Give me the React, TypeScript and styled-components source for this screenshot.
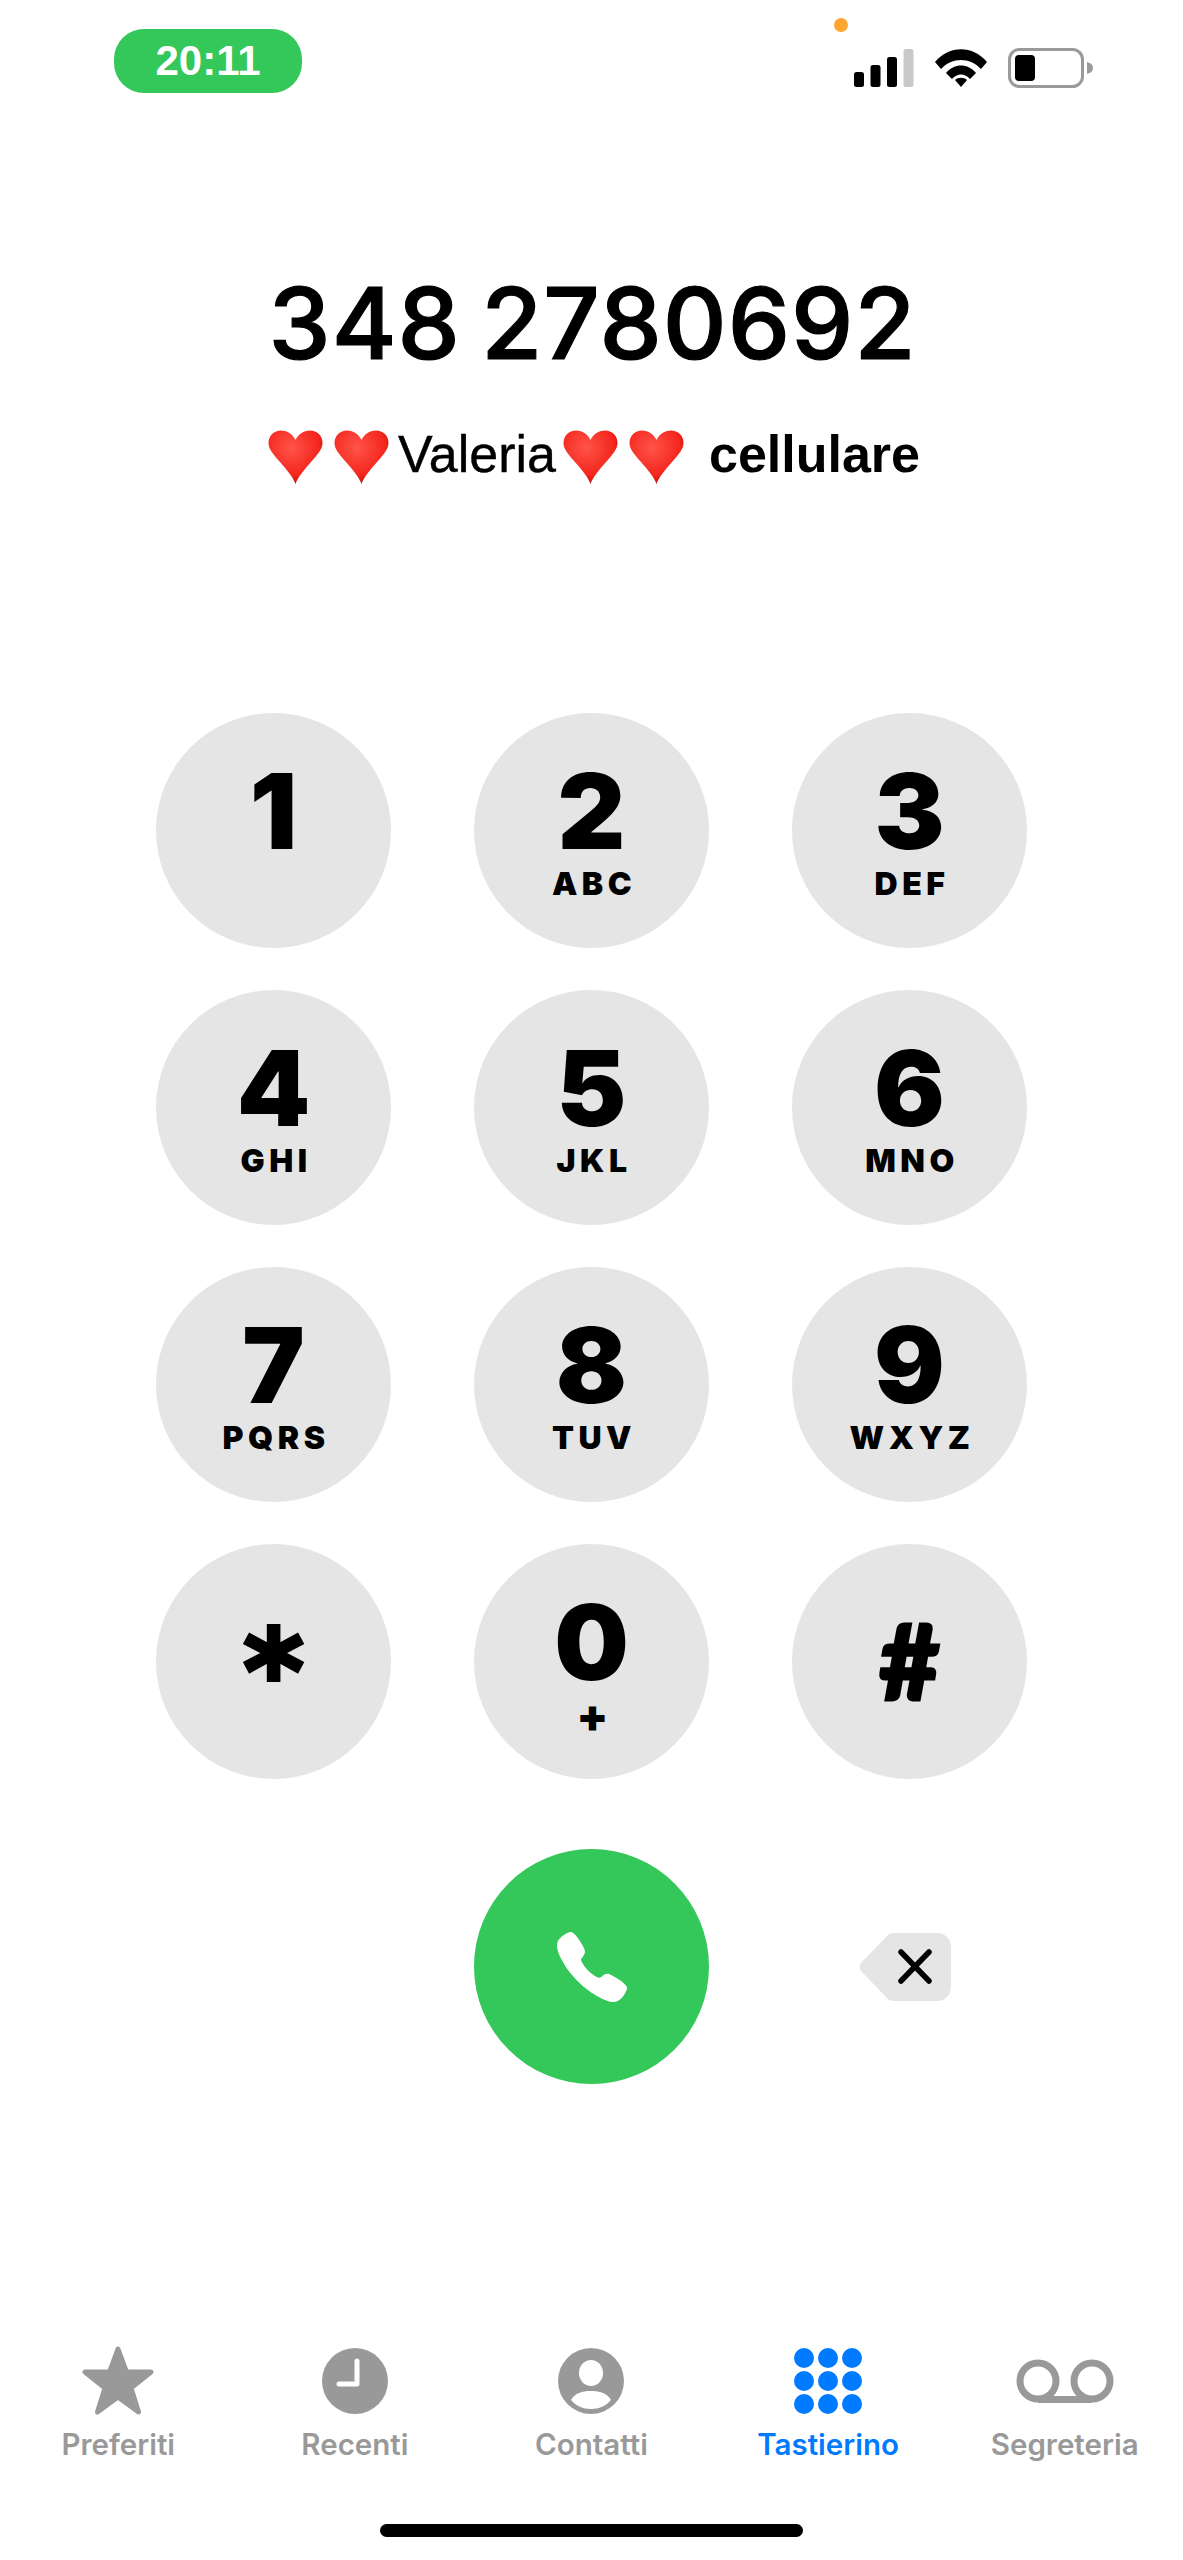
import React from 'react';
import styled, { createGlobalStyle } from 'styled-components';
import { IoCall } from 'react-icons/io5';

const GlobalStyle = createGlobalStyle`
  html, body {
    margin: 0;
    padding: 0;
    background: #fff;
  }
`;

const Page = styled.div`
  width: 1183px;
  height: 2560px;
  display: flex;
  flex-direction: column;
  position: relative;
  overflow: hidden;
  background: #fff;
  font-family: Inter, "Liberation Sans", sans-serif;
  color: #000;
`;

const StatusBar = styled.div`
  height: 64px;
  margin-top: 29px;
  padding: 0 89px 0 114px;
  display: flex;
  align-items: center;
  justify-content: space-between;
`;

const TimePill = styled.div`
  width: 188px;
  height: 64px;
  border-radius: 30px;
  background: #34c759;
  color: #fff;
  font-family: "Liberation Sans", Arial, sans-serif;
  font-size: 42px;
  font-weight: 700;
  display: flex;
  align-items: center;
  justify-content: center;
`;

const StatusIcons = styled.div`
  display: flex;
  align-items: center;
  gap: 21px;
  padding-top: 13px;
`;

const OrangeDot = styled.div`
  position: absolute;
  left: 834px;
  top: 18px;
  width: 14px;
  height: 14px;
  border-radius: 50%;
  background: #ffa530;
`;

const PhoneNumber = styled.div`
  margin-top: 170px;
  padding-left: 2px;
  text-align: center;
  font-size: 99px;
  line-height: 120px;
  font-weight: 500;
  letter-spacing: 1px;
  word-spacing: -7px;
  -webkit-text-stroke: 1.2px #000;
`;

const Contact = styled.div`
  margin-top: 43px;
  padding-left: 5px;
  height: 56px;
  display: flex;
  align-items: center;
  justify-content: center;
  font-family: "Liberation Sans", Arial, sans-serif;
  font-size: 52px;
`;

const Name = styled.span`
  margin: 0 7px 0 9px;
  -webkit-text-stroke: 0.4px #000;
`;

const Label = styled.span`
  margin-left: 25px;
  font-weight: 700;
  font-size: 52px;
`;

const Heart = styled.svg<{ $gap?: boolean }>`
  width: 55px;
  height: 54px;
  flex: none;
  margin-top: 5px;
  margin-left: ${props => (props.$gap ? '11px' : '0')};
`;

const Keypad = styled.div`
  margin-top: 231px;
  display: grid;
  grid-template-columns: repeat(3, 235px);
  grid-auto-rows: 235px;
  column-gap: 83px;
  row-gap: 42px;
  justify-content: center;
`;

const Key = styled.div`
  width: 235px;
  height: 235px;
  border-radius: 50%;
  background: #e5e5e5;
  display: flex;
  flex-direction: column;
  align-items: center;
`;

const Digit = styled.div`
  margin-top: 44px;
  font-size: 105px;
  line-height: 107px;
  font-weight: 900;
`;

const Letters = styled.div`
  margin-top: 1px;
  padding-left: 5px;
  font-size: 32px;
  line-height: 38px;
  font-weight: 900;
  letter-spacing: 4.5px;
`;

const Plus = styled.div`
  margin-top: -2px;
  padding-left: 2px;
  font-size: 46px;
  line-height: 44px;
  font-weight: 900;
`;

const Symbol = styled.div<{ $top: number; $size: number; $font: string; $stroke: number }>`
  margin-top: ${props => props.$top}px;
  font-family: ${props => props.$font}, sans-serif;
  font-size: ${props => props.$size}px;
  line-height: ${props => props.$size}px;
  font-weight: 900;
  -webkit-text-stroke: ${props => props.$stroke}px #000;
`;

const CallRow = styled.div`
  margin-top: 70px;
  display: grid;
  grid-template-columns: repeat(3, 235px);
  column-gap: 83px;
  justify-content: center;
  align-items: center;
`;

const CallButton = styled.div`
  grid-column: 2;
  width: 235px;
  height: 235px;
  border-radius: 50%;
  background: #34c759;
  color: #fff;
  display: flex;
  align-items: center;
  justify-content: center;
`;

const Backspace = styled.svg`
  grid-column: 3;
  justify-self: center;
  margin-right: 9px;
  width: 92px;
  height: 68px;
`;

const TabBar = styled.div`
  margin-top: auto;
  display: grid;
  grid-template-columns: repeat(5, 1fr);
`;

const Tab = styled.div<{ $active?: boolean }>`
  display: flex;
  flex-direction: column;
  align-items: center;
  color: ${props => (props.$active ? '#007aff' : '#999')};
`;

const TabIcon = styled.div`
  height: 72px;
  display: flex;
  align-items: center;
  justify-content: center;
`;

const TabLabel = styled.div`
  margin-top: 10px;
  font-size: 29.5px;
  line-height: 34px;
  font-weight: 600;
`;

const HomeIndicator = styled.div`
  width: 423px;
  height: 13px;
  margin: 63px auto 23px;
  border-radius: 7px;
  background: #000;
`;

const HeartIcon = ({ gap, id }: { gap?: boolean; id: string }) => (
  <Heart $gap={gap} viewBox="0 0 55 54">
    <defs>
      <radialGradient id={id} cx="42%" cy="32%" r="72%">
        <stop offset="0%" stopColor="#ff5449" />
        <stop offset="72%" stopColor="#f3261d" />
        <stop offset="100%" stopColor="#b90d08" />
      </radialGradient>
    </defs>
    <path
      d="M27.500 54C25 47 19 40 12 32C5 24 .5 19 .5 13C.5 5.500 6 .5 13 .5C19.500 .5 25 4.500 27.500 10C30 4.500 35.500 .5 42 .5C49 .5 54.500 5.500 54.500 13C54.500 19 50 24 43 32C36 40 30 47 27.500 54Z"
      fill={`url(#${id})`}
    />
  </Heart>
);

const SignalIcon = () => (
  <svg width="60" height="38" viewBox="0 0 60 38">
    <rect x="0" y="23" width="10" height="15" rx="2.500" fill="#000" />
    <rect x="16.500" y="16" width="10" height="22" rx="2.500" fill="#000" />
    <rect x="33" y="8" width="10" height="30" rx="2.500" fill="#000" />
    <rect x="49.500" y="0" width="10" height="38" rx="2.500" fill="#c9c9c9" />
  </svg>
);

const WifiIcon = () => (
  <svg width="52" height="38" viewBox="0 0 52 38">
    <path d="M0 13C14-4 38-4 52 13L46 20C35 8 17 8 6 20Z" fill="#000" />
    <path d="M11 24C19 14 33 14 41 24L35 30C30 24 22 24 17 30Z" fill="#000" />
    <path d="M20 31C23 28 29 28 32 31L26 38Z" fill="#000" />
  </svg>
);

const BatteryIcon = () => (
  <svg width="86" height="40" viewBox="0 0 86 40">
    <rect x="1.500" y="1.500" width="73" height="37" rx="10" fill="none" stroke="#9a9a9a" strokeWidth="3" />
    <rect x="7" y="7" width="20" height="26" rx="4" fill="#000" />
    <path d="M79 14C83 15 85 17 85 20C85 23 83 25 79 26Z" fill="#9a9a9a" />
  </svg>
);

const StarIcon = () => (
  <svg width="72" height="70" viewBox="0 0 72 70">
    <path
      d="M36 3L44.500 26H69L49 42L56.500 66L36 51L15.500 66L23 42L3 26H27.500Z"
      fill="currentColor"
      stroke="currentColor"
      strokeWidth="5"
      strokeLinejoin="round"
    />
  </svg>
);

const ClockIcon = () => (
  <svg width="66" height="66" viewBox="0 0 66 66">
    <circle cx="33" cy="33" r="33" fill="currentColor" />
    <path d="M35 13V36H17" fill="none" stroke="#fff" strokeWidth="5" strokeLinecap="round" strokeLinejoin="round" />
  </svg>
);

const PersonIcon = () => (
  <svg width="66" height="66" viewBox="0 0 66 66">
    <circle cx="33" cy="33" r="33" fill="currentColor" />
    <ellipse cx="33" cy="25" rx="12" ry="13" fill="#fff" />
    <path d="M13 52C17 45 24 43 33 43C42 43 49 45 53 52C48 58 41 61 33 61C25 61 18 58 13 52Z" fill="#fff" />
  </svg>
);

const DotsIcon = () => (
  <svg width="68" height="66" viewBox="0 0 68 66">
    {[10, 34, 58].map(cx =>
      [10, 33, 56].map(cy => <circle key={`${cx}-${cy}`} cx={cx} cy={cy} r="10" fill="currentColor" />)
    )}
  </svg>
);

const VoicemailIcon = () => (
  <svg width="98" height="44" viewBox="0 0 98 44">
    <circle cx="22" cy="22" r="18" fill="none" stroke="currentColor" strokeWidth="7" />
    <circle cx="76" cy="22" r="18" fill="none" stroke="currentColor" strokeWidth="7" />
    <path d="M22 40.500H76" stroke="currentColor" strokeWidth="7" />
  </svg>
);

const keys = [
  { digit: '1', letters: '' },
  { digit: '2', letters: 'ABC' },
  { digit: '3', letters: 'DEF' },
  { digit: '4', letters: 'GHI' },
  { digit: '5', letters: 'JKL' },
  { digit: '6', letters: 'MNO' },
  { digit: '7', letters: 'PQRS' },
  { digit: '8', letters: 'TUV' },
  { digit: '9', letters: 'WXYZ' },
];

const tabs = [
  { label: 'Preferiti', icon: <StarIcon /> },
  { label: 'Recenti', icon: <ClockIcon /> },
  { label: 'Contatti', icon: <PersonIcon /> },
  { label: 'Tastierino', icon: <DotsIcon />, active: true },
  { label: 'Segreteria', icon: <VoicemailIcon /> },
];

const App: React.FC = () => {
  return (
    <Page>
      <GlobalStyle />
      <OrangeDot />
      <StatusBar>
        <TimePill>20:11</TimePill>
        <StatusIcons>
          <SignalIcon />
          <WifiIcon />
          <BatteryIcon />
        </StatusIcons>
      </StatusBar>

      <PhoneNumber>348 2780692</PhoneNumber>
      <Contact>
        <HeartIcon id="h1" />
        <HeartIcon id="h2" gap />
        <Name>Valeria</Name>
        <HeartIcon id="h3" />
        <HeartIcon id="h4" gap />
        <Label>cellulare</Label>
      </Contact>

      <Keypad>
        {keys.map(key => (
          <Key key={key.digit}>
            <Digit>{key.digit}</Digit>
            {key.letters && <Letters>{key.letters}</Letters>}
          </Key>
        ))}
        <Key>
          <Symbol $top={70} $size={116} $font='"DejaVu Sans"' $stroke={4}>*</Symbol>
        </Key>
        <Key>
          <Digit>0</Digit>
          <Plus>+</Plus>
        </Key>
        <Key>
          <Symbol $top={64} $size={104} $font="Lato" $stroke={3}>#</Symbol>
        </Key>
      </Keypad>

      <CallRow>
        <CallButton>
          <IoCall size={80} />
        </CallButton>
        <Backspace viewBox="0 0 92 68">
          <path
            d="M36 0H78C86 0 92 6 92 14V54C92 62 86 68 78 68H36C32 68 29 67 27 64L2 38C0 35.500 0 32.500 2 30L27 4C29 1 32 0 36 0Z"
            fill="#e5e5e5"
          />
          <path d="M42 19L70 48M70 19L42 48" stroke="#000" strokeWidth="5.500" strokeLinecap="round" />
        </Backspace>
      </CallRow>

      <TabBar>
        {tabs.map(tab => (
          <Tab key={tab.label} $active={tab.active}>
            <TabIcon>{tab.icon}</TabIcon>
            <TabLabel>{tab.label}</TabLabel>
          </Tab>
        ))}
      </TabBar>
      <HomeIndicator />
    </Page>
  );
};

export default App;
